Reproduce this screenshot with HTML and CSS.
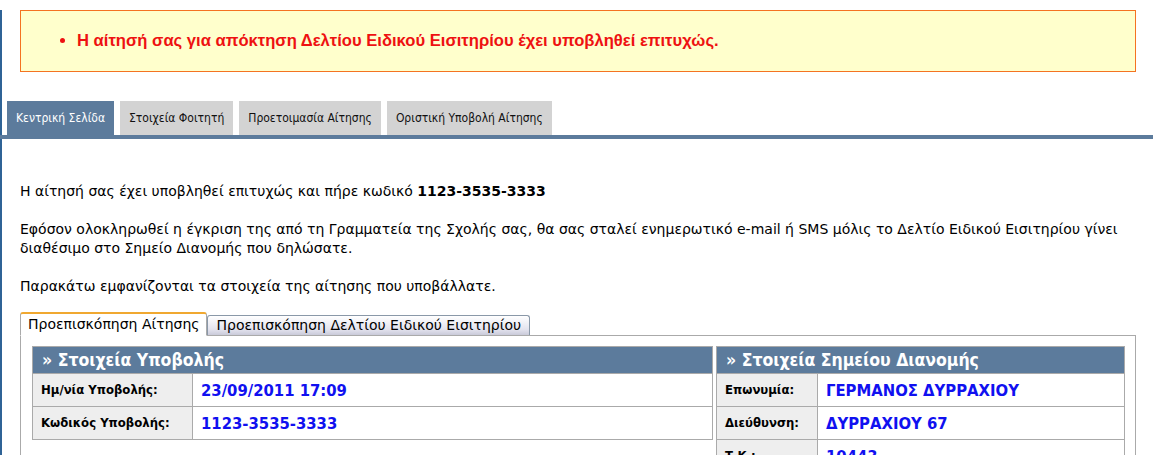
FILE: index.html
```html
<!DOCTYPE html>
<html lang="el">
<head>
<meta charset="utf-8">
<title>Αίτηση</title>
<link rel="stylesheet" href="styles.css">
</head>
<body>
<div class="page">
  <div class="msg">
    <ul>
      <li>Η αίτησή σας για απόκτηση Δελτίου Ειδικού Εισιτηρίου έχει υποβληθεί επιτυχώς.</li>
    </ul>
  </div>

  <nav class="tabs">
    <a class="tab active">Κεντρική Σελίδα</a>
    <a class="tab">Στοιχεία Φοιτητή</a>
    <a class="tab">Προετοιμασία Αίτησης</a>
    <a class="tab">Οριστική Υποβολή Αίτησης</a>
  </nav>
  <div class="tabbar"></div>

  <main class="content">
    <p class="p1">Η αίτησή σας έχει υποβληθεί επιτυχώς και πήρε κωδικό <b>1123-3535-3333</b></p>
    <p>Εφόσον ολοκληρωθεί η έγκριση της από τη Γραμματεία της Σχολής σας, θα σας σταλεί ενημερωτικό e-mail ή SMS μόλις το Δελτίο Ειδικού Εισιτηρίου γίνει διαθέσιμο στο Σημείο Διανομής που δηλώσατε.</p>
    <p>Παρακάτω εμφανίζονται τα στοιχεία της αίτησης που υποβάλλατε.</p>

    <div class="subtabs">
      <span class="subtab sel">Προεπισκόπηση Αίτησης</span>
      <span class="subtab">Προεπισκόπηση Δελτίου Ειδικού Εισιτηρίου</span>
    </div>
    <div class="panel">
      <table class="box left">
        <tr><th colspan="2">» Στοιχεία Υποβολής</th></tr>
        <tr><td class="lbl">Ημ/νία Υποβολής:</td><td class="val">23/09/2011 17:09</td></tr>
        <tr><td class="lbl">Κωδικός Υποβολής:</td><td class="val">1123-3535-3333</td></tr>
      </table>
      <table class="box right">
        <tr><th colspan="2">» Στοιχεία Σημείου Διανομής</th></tr>
        <tr><td class="lbl">Επωνυμία:</td><td class="val">ΓΕΡΜΑΝΟΣ ΔΥΡΡΑΧΙΟΥ</td></tr>
        <tr><td class="lbl">Διεύθυνση:</td><td class="val">ΔΥΡΡΑΧΙΟΥ 67</td></tr>
        <tr><td class="lbl">Τ.Κ.:</td><td class="val">10443</td></tr>
      </table>
    </div>
  </main>
</div>
</body>
</html>
```
FILE: styles.css
```css
html, body {
  margin: 0;
  padding: 0;
  background: #fff;
}
body {
  font-family: "DejaVu Sans", "Liberation Sans", sans-serif;
  color: #000;
}
.page {
  border-left: 2px solid #2f6396;
  min-height: 455px;
}
.msg {
  margin: 10px 17px 0 18px;
  height: 60px;
  border: 1px solid #f47321;
  background: #ffffcc;
  display: flex;
  align-items: center;
}
.msg ul {
  margin: 0;
  padding-left: 56px;
  color: #ee1111;
  font-weight: bold;
  font-size: 16.6px;
  font-family: "Liberation Sans", sans-serif;
}
.tabs {
  display: flex;
  gap: 6px;
  margin-top: 29px;
  padding-left: 5px;
}
.tab {
  display: block;
  height: 34px;
  line-height: 34px;
  padding: 0 9px;
  background: #d3d3d3;
  color: #111;
  font-size: 12px;
  font-family: "DejaVu Sans Condensed", "DejaVu Sans", sans-serif;
}
.tab.active {
  background: #5c7b9c;
  color: #fff;
}
.tabbar {
  height: 4px;
  background: #5c7b9c;
  margin-left: -2px;
}
.content {
  padding: 0 17px 0 18px;
  font-size: 14px;
}
.content p {
  margin: 0 0 19px;
  line-height: 19px;
}
.content p.p1 {
  margin-top: 43px;
}
.content p:last-of-type {
  margin-bottom: 16px;
}
.subtabs {
  display: flex;
  align-items: flex-end;
  height: 23px;
}
.subtab {
  display: block;
  font-size: 14px;
  padding: 0 8px 0 8px;
  height: 19px;
  line-height: 19px;
  border: 1px solid #8a98a8;
  border-bottom: none;
  border-radius: 3px 3px 0 0;
  background: linear-gradient(#ffffff, #e3e3ee 70%, #c9cad9);
}
.subtab.sel {
  height: 21px;
  line-height: 21px;
  padding: 0 7px 0 7px;
  border: 1px solid #aaa;
  border-top: 2px solid #f0a830;
  border-bottom: 1px solid #fff;
  background: #fff;
  margin-bottom: -1px;
  position: relative;
  z-index: 1;
}
.panel {
  border: 1px solid #aaa;
  display: flex;
  gap: 3px;
  padding: 10px 10px 20px 11px;
  align-items: flex-start;
}
.box {
  border-collapse: collapse;
  border: 1px solid #aaa;
}
.box.left { width: 681px; }
.box.right { flex: 1; }
.box th {
  background: #5c7b9c;
  color: #fff;
  text-align: left;
  font-size: 17.5px;
  font-weight: bold;
  height: 26px;
  padding: 0 0 0 9px;
  font-family: "DejaVu Sans Condensed", "DejaVu Sans", sans-serif;
}
.box td {
  border: 1px solid #aaa;
  height: 32px;
  padding: 0 8px;
}
.box td.lbl {
  background: #eeeeee;
  font-size: 11.7px;
  font-weight: bold;
  font-family: "DejaVu Sans", sans-serif;
}
.box.left td.lbl { width: 143px; }
.box.right td.lbl { width: 84px; }
.box td.val {
  color: #1010f0;
  font-weight: bold;
  font-size: 16.5px;
  font-family: "DejaVu Sans Condensed", "DejaVu Sans", sans-serif;
}
```
